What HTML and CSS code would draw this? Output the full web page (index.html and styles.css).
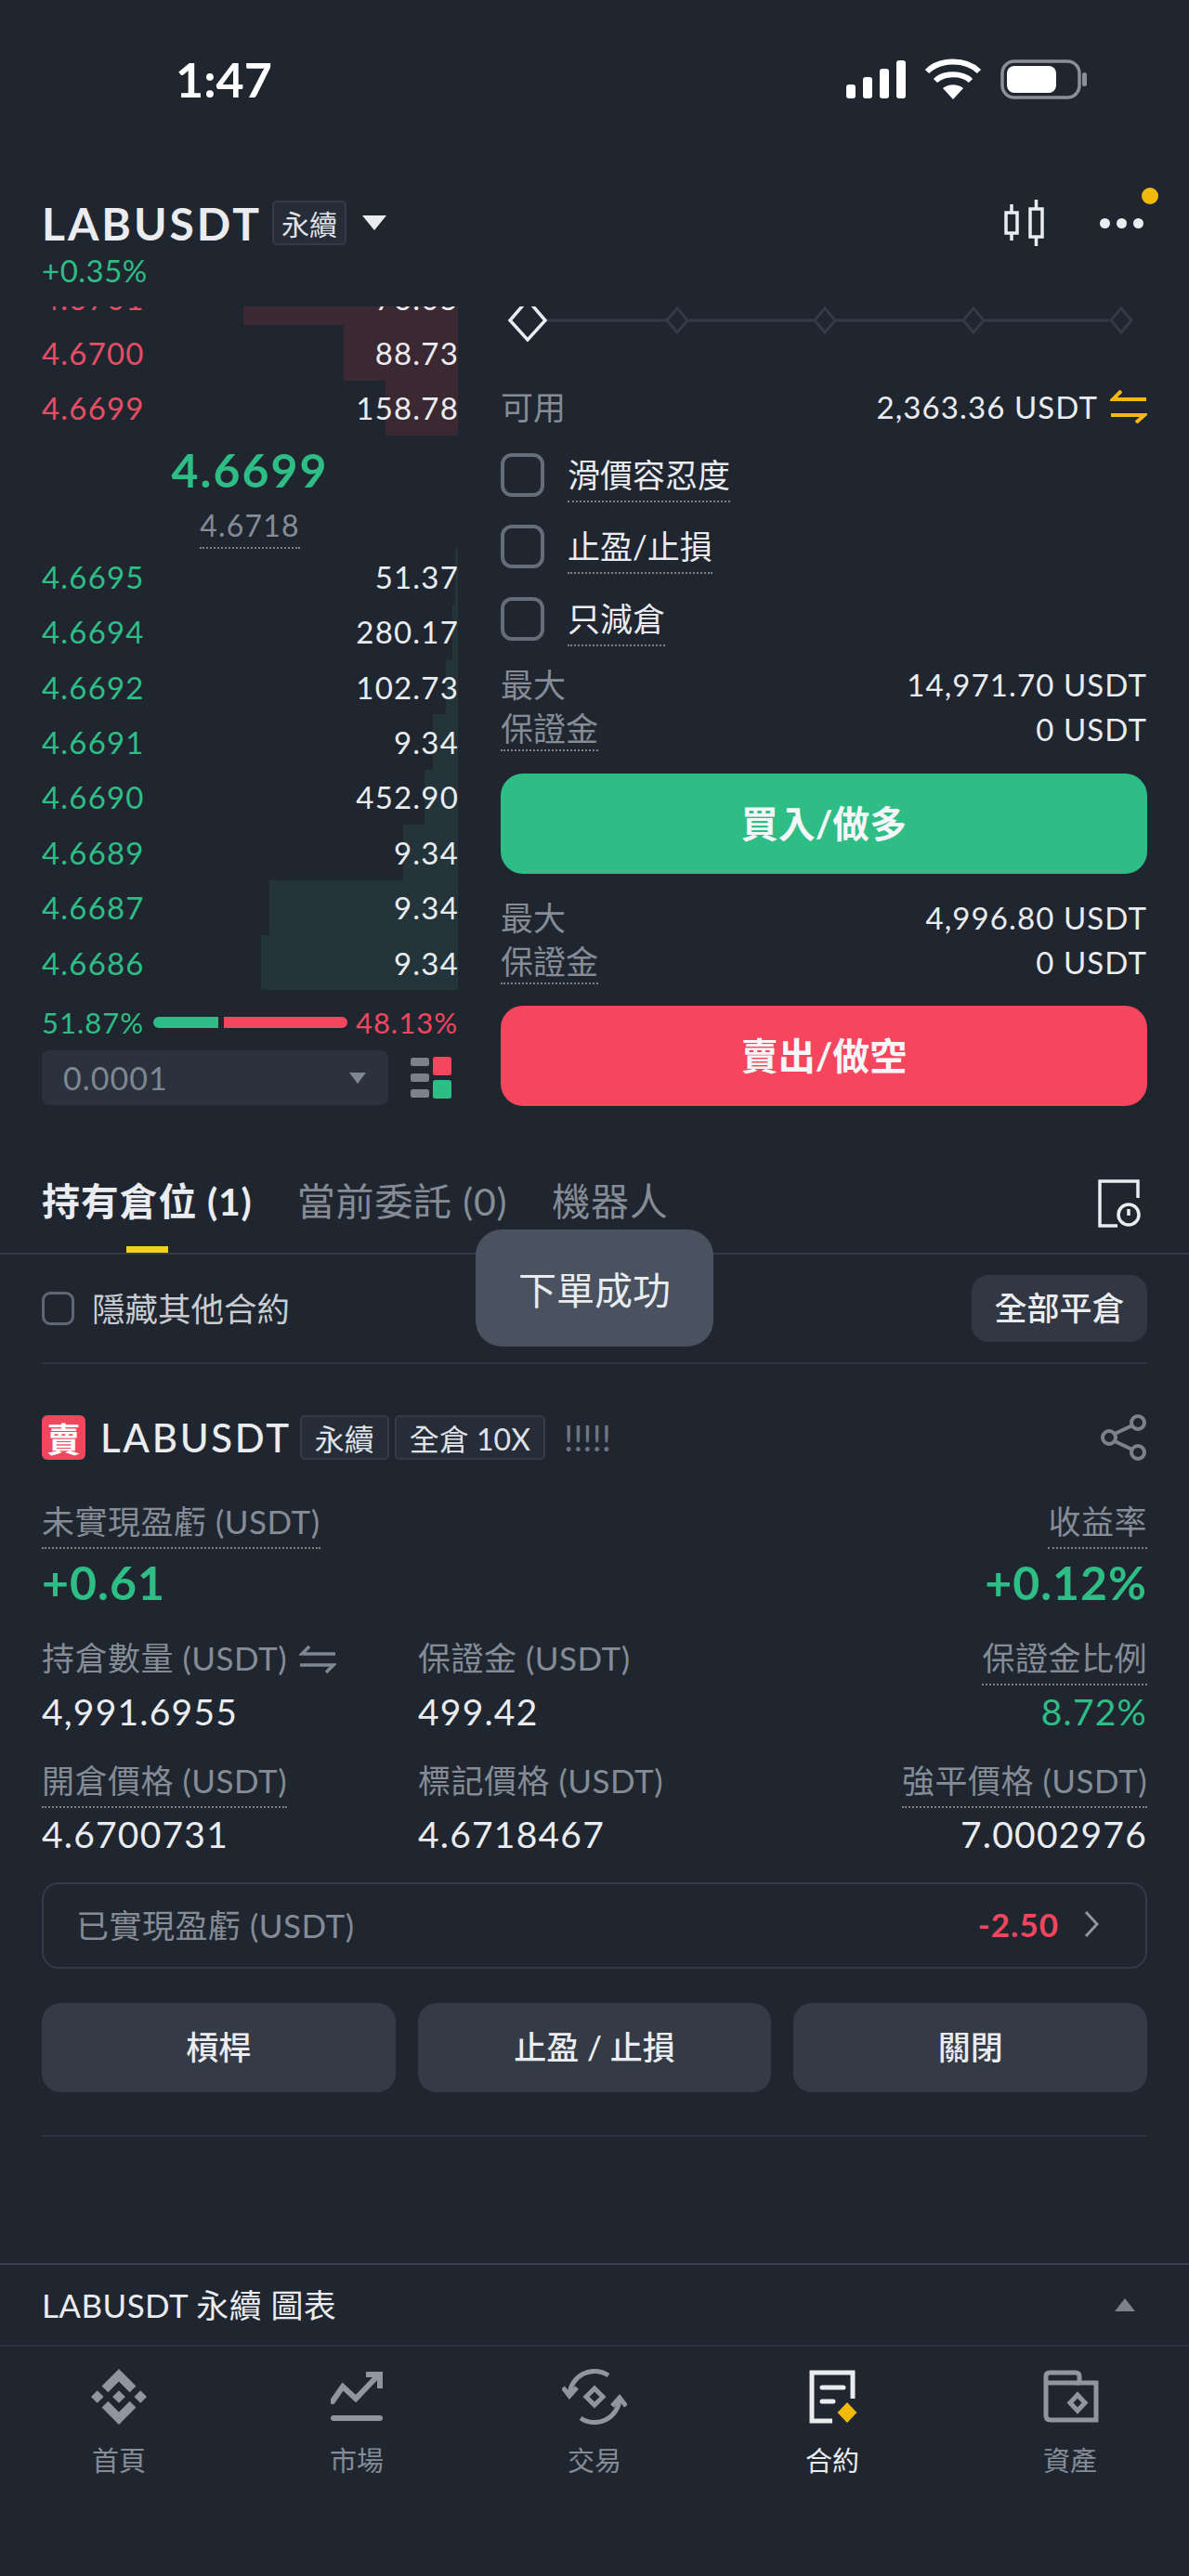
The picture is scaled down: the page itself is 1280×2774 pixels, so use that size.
FILE: index.html
```html
<!DOCTYPE html>
<html lang="zh-Hant">
<head>
    <meta charset="UTF-8">
    <meta name="viewport" content="width=device-width, initial-scale=1.0">
    <title>LABUSDT 永續</title>
    <link rel="stylesheet" href="styles.css">
</head>
<body>
<div class="page">

    <!-- Barra de status -->
    <div class="status">
        <span class="time">1:47</span>
        <svg class="status-icons" width="262" height="50" viewBox="0 0 262 50">
            <g fill="#fff">
                <rect x="-3" y="31" width="10" height="15" rx="3"/>
                <rect x="15" y="23" width="10" height="23" rx="3"/>
                <rect x="33" y="14" width="10" height="32" rx="3"/>
                <rect x="51" y="5" width="10" height="41" rx="3"/>
            </g>
            <g fill="none" stroke="#fff" stroke-width="6">
                <path d="M84 17 C98 3 126 3 140 17"/>
                <path d="M93 27 C102 18 122 18 131 27"/>
            </g>
            <path d="M101 35 C107 30 117 30 123 35 L112 47 Z" fill="#fff"/>
            <rect x="165" y="6" width="83" height="39" rx="13" fill="none" stroke="#8b9096" stroke-width="3.5"/>
            <rect x="170" y="11" width="53" height="29" rx="8" fill="#fff"/>
            <rect x="251" y="18" width="5" height="15" rx="2.5" fill="#8b9096"/>
        </svg>
    </div>

    <!-- Cabecalho do par -->
    <div class="head">
        <div class="head-row">
            <span class="symbol">LABUSDT</span>
            <span class="tag head-tag">永續</span>
            <span class="caret-down"></span>
            <svg class="candle-icon" width="46" height="50" viewBox="0 0 46 50">
                <g fill="none" stroke="#eaecef" stroke-width="3.5">
                    <rect x="3" y="14" width="12" height="22"/>
                    <path d="M9 5 V14 M9 36 V44"/>
                    <rect x="29" y="10" width="13" height="30"/>
                    <path d="M35.5 0 V10 M35.5 40 V50"/>
                </g>
            </svg>
            <div class="more">
                <span></span><span></span><span></span>
                <i class="more-dot"></i>
            </div>
        </div>
        <div class="change">+0.35%</div>
    </div>

    <div class="trade">
        <!-- Livro de ofertas -->
        <div class="book">
            <div class="book-clip">
                <div class="asks">
                    <div class="row ask"><i class="depth" style="width: 231px"></i><span>4.6701</span><b>76.05</b></div>
                    <div class="row ask"><i class="depth" style="width: 123px"></i><span>4.6700</span><b>88.73</b></div>
                    <div class="row ask"><i class="depth" style="width: 78px"></i><span>4.6699</span><b>158.78</b></div>
                </div>
                <div class="mid">
                    <div class="mid-price">4.6699</div>
                    <span class="mark tip">4.6718</span>
                </div>
                <div class="bids">
                    <div class="row bid"><i class="depth" style="width: 3px"></i><span>4.6695</span><b>51.37</b></div>
                    <div class="row bid"><i class="depth" style="width: 6px"></i><span>4.6694</span><b>280.17</b></div>
                    <div class="row bid"><i class="depth" style="width: 13px"></i><span>4.6692</span><b>102.73</b></div>
                    <div class="row bid"><i class="depth" style="width: 27px"></i><span>4.6691</span><b>9.34</b></div>
                    <div class="row bid"><i class="depth" style="width: 36px"></i><span>4.6690</span><b>452.90</b></div>
                    <div class="row bid"><i class="depth" style="width: 59px"></i><span>4.6689</span><b>9.34</b></div>
                    <div class="row bid"><i class="depth" style="width: 203px"></i><span>4.6687</span><b>9.34</b></div>
                    <div class="row bid"><i class="depth" style="width: 212px"></i><span>4.6686</span><b>9.34</b></div>
                </div>
            </div>
            <div class="ratio">
                <span class="up">51.87%</span>
                <div class="ratio-bar">
                    <i class="ratio-buy"></i>
                    <i class="ratio-sell"></i>
                </div>
                <span class="down">48.13%</span>
            </div>
            <div class="book-tools">
                <div class="step">
                    <span>0.0001</span>
                    <i class="caret-small"></i>
                </div>
                <svg width="44" height="46" viewBox="0 0 44 46">
                    <g fill="#7b828c">
                        <rect x="0" y="1" width="20" height="9" rx="2.5"/>
                        <rect x="0" y="18" width="20" height="9" rx="2.5"/>
                        <rect x="0" y="35" width="20" height="9" rx="2.5"/>
                    </g>
                    <rect x="24" y="0" width="20" height="20" rx="2.5" fill="#f6465d"/>
                    <rect x="24" y="25" width="20" height="20" rx="2.5" fill="#2ebd85"/>
                </svg>
            </div>
        </div>

        <!-- Formulario de ordem -->
        <div class="order">
            <svg class="slider" width="696" height="40" viewBox="0 0 696 40">
                <path d="M49 15 H655" stroke="#343b46" stroke-width="3"/>
                <g fill="#1f2630" stroke="#343b46" stroke-width="3">
                    <path d="M190 2 L201 15 L190 28 L179 15 Z"/>
                    <path d="M349 2 L360 15 L349 28 L338 15 Z"/>
                    <path d="M509 2 L520 15 L509 28 L498 15 Z"/>
                    <path d="M668 2 L679 15 L668 28 L657 15 Z"/>
                </g>
                <path d="M29 -7 L48 15 L29 36 L10 15 Z" fill="#1f2630" stroke="#eaecef" stroke-width="3.5"/>
            </svg>
            <div class="line avail">
                <span class="muted">可用</span>
                <span class="avail-value"><span class="num">2,363.36 USDT</span>
                    <svg class="swap" width="40" height="36" viewBox="0 0 40 36">
                        <path d="M39 10 H3 L12 1 M1 27 H37 L28 35" fill="none" stroke="#f0b90b" stroke-width="4"/>
                    </svg>
                </span>
            </div>
            <div class="checks">
                <div class="check-row"><i class="box"></i><span class="tip">滑價容忍度</span></div>
                <div class="check-row"><i class="box"></i><span class="tip">止盈/止損</span></div>
                <div class="check-row"><i class="box"></i><span class="tip">只減倉</span></div>
            </div>
            <div class="summary first">
                <div class="line"><span class="muted">最大</span><span class="num">14,971.70 USDT</span></div>
                <div class="line"><span class="muted tip">保證金</span><span class="num">0 USDT</span></div>
            </div>
            <div class="action buy">買入/做多</div>
            <div class="summary">
                <div class="line"><span class="muted">最大</span><span class="num">4,996.80 USDT</span></div>
                <div class="line"><span class="muted tip">保證金</span><span class="num">0 USDT</span></div>
            </div>
            <div class="action sell">賣出/做空</div>
        </div>
    </div>

    <!-- Abas -->
    <div class="tabs">
        <div class="tab active">持有倉位 (1)<i></i></div>
        <div class="tab">當前委託 (0)</div>
        <div class="tab">機器人</div>
        <svg class="tabs-icon" width="50" height="52" viewBox="0 0 50 52">
            <g fill="none" stroke="#eaecef" stroke-width="3.5">
                <path d="M43 20 V2 H2 V50 H21"/>
                <circle cx="33" cy="38" r="11"/>
                <path d="M33 32 V39"/>
            </g>
        </svg>
    </div>

    <div class="filter">
        <label class="hide">
            <i class="box small"></i>
            <span>隱藏其他合約</span>
        </label>
        <div class="close-all">全部平倉</div>
    </div>

    <!-- Posicao -->
    <div class="position">
        <div class="pos-head">
            <span class="side">賣</span>
            <span class="pos-symbol">LABUSDT</span>
            <span class="tag">永續</span>
            <span class="tag">全倉 10X</span>
            <span class="bangs">!!!!!</span>
            <svg class="share" width="50" height="50" viewBox="0 0 50 50">
                <g fill="none" stroke="#7b828c" stroke-width="4">
                    <circle cx="40" cy="9" r="7"/>
                    <circle cx="9" cy="25" r="7"/>
                    <circle cx="40" cy="41" r="7"/>
                    <path d="M15 21 L34 12 M15 29 L34 38"/>
                </g>
            </svg>
        </div>

        <div class="metrics">
            <div class="metric">
                <span class="label tip">未實現盈虧 (USDT)</span>
                <div class="value big up">+0.61</div>
            </div>
            <div></div>
            <div class="metric right">
                <span class="label tip">收益率</span>
                <div class="value big up">+0.12%</div>
            </div>

            <div class="metric">
                <span class="label">持倉數量 (USDT)
                    <svg class="swap-small" width="40" height="30" viewBox="0 0 40 30">
                        <path d="M39 9 H3 L11 1 M1 21 H37 L29 29" fill="none" stroke="#7f8791" stroke-width="3.5"/>
                    </svg>
                </span>
                <div class="value">4,991.6955</div>
            </div>
            <div class="metric">
                <span class="label">保證金 (USDT)</span>
                <div class="value">499.42</div>
            </div>
            <div class="metric right">
                <span class="label tip">保證金比例</span>
                <div class="value up">8.72%</div>
            </div>

            <div class="metric">
                <span class="label tip">開倉價格 (USDT)</span>
                <div class="value">4.6700731</div>
            </div>
            <div class="metric">
                <span class="label">標記價格 (USDT)</span>
                <div class="value">4.6718467</div>
            </div>
            <div class="metric right">
                <span class="label tip">強平價格 (USDT)</span>
                <div class="value">7.0002976</div>
            </div>
        </div>

        <div class="realized">
            <span class="muted">已實現盈虧 (USDT)</span>
            <span class="realized-value">-2.50</span>
            <svg width="16" height="30" viewBox="0 0 16 30">
                <path d="M2 2 L14 15 L2 28" fill="none" stroke="#8f96a0" stroke-width="3"/>
            </svg>
        </div>

        <div class="pos-actions">
            <div class="pos-btn">槓桿</div>
            <div class="pos-btn">止盈 / 止損</div>
            <div class="pos-btn">關閉</div>
        </div>
        <div class="pos-end"></div>
    </div>

    <!-- Grafico recolhido -->
    <div class="chart-bar">
        <span>LABUSDT 永續 圖表</span>
        <i class="caret-up"></i>
    </div>

    <!-- Navegacao -->
    <nav class="nav">
        <div class="nav-item">
            <svg width="60" height="60" viewBox="0 0 126.6 126.6">
                <g fill="#8f96a0">
                    <path d="M38.7 53.2 L63.3 28.6 L87.9 53.2 L102.2 38.9 L63.3 0 L24.4 38.9 Z"/>
                    <path d="M0 63.3 L14.3 49 L28.6 63.3 L14.3 77.6 Z"/>
                    <path d="M38.7 73.4 L63.3 98 L87.9 73.4 L102.2 87.7 L63.3 126.6 L24.4 87.7 Z"/>
                    <path d="M98 63.3 L112.3 49 L126.6 63.3 L112.3 77.6 Z"/>
                    <path d="M63.3 48.8 L77.8 63.3 L63.3 77.8 L48.8 63.3 Z"/>
                </g>
            </svg>
            <span>首頁</span>
        </div>
        <div class="nav-item">
            <svg width="56" height="60" viewBox="0 0 56 60">
                <g fill="none" stroke="#8f96a0" stroke-width="6" stroke-linecap="round">
                    <path d="M2 35 L13 19 L27 32 L50 8"/>
                    <path d="M38 6 H53 V21" stroke-linecap="butt"/>
                    <path d="M3 53 H53"/>
                </g>
            </svg>
            <span>市場</span>
        </div>
        <div class="nav-item">
            <svg width="70" height="60" viewBox="0 0 70 60">
                <g fill="none" stroke="#8f96a0" stroke-width="5">
                    <path d="M8 28 A27 27 0 0 1 50 7"/>
                    <path d="M1 20 L8 29 L16 20"/>
                    <path d="M62 32 A27 27 0 0 1 20 53"/>
                    <path d="M54 40 L62 31 L69 40"/>
                    <path d="M35 21 L44 30 L35 39 L26 30 Z"/>
                </g>
            </svg>
            <span>交易</span>
        </div>
        <div class="nav-item active">
            <svg width="64" height="60" viewBox="0 0 64 60">
                <g fill="none" stroke="#eaecef" stroke-width="5">
                    <path d="M54 32 V4 H10 V56 H32"/>
                    <path d="M21 20 H44 M21 35 H33" stroke-linecap="round"/>
                </g>
                <path d="M48 36 L58.500 47 L48 58 L37.500 47 Z" fill="#f0b90b"/>
            </svg>
            <span>合約</span>
        </div>
        <div class="nav-item">
            <svg width="64" height="60" viewBox="0 0 64 60">
                <g fill="none" stroke="#8f96a0" stroke-width="5">
                    <path d="M6 50 V8 Q6 4 10 4 H38 Q42 4 42 8 V15 H60 V55 H11 Q6 55 6 50 Z"/>
                    <path d="M6 15 H42"/>
                    <path d="M40 28 L48 36.500 L40 45 L32 36.500 Z"/>
                </g>
            </svg>
            <span>資產</span>
        </div>
    </nav>

    <div class="toast">下單成功</div>
</div>
</body>
</html>
```

FILE: styles.css
```css
* {
    box-sizing: border-box;
}

body {
    margin: 0;
    background-color: #1f2630;
    color: #eaecef;
    font-family: Lato, "Noto Sans CJK TC", sans-serif;
    font-size: 34px;
}

i {
    display: block;
}

.page {
    position: relative;
    width: 1280px;
    height: 2774px;
    overflow: hidden;
}

.up {
    color: #2ebd85;
}

.down {
    color: #f0475e;
}

.muted {
    color: #858c96;
}

/* sublinhado pontilhado */
.tip {
    display: inline-block;
    border-bottom: 2px dotted #7b828c;
}

/* status */
.status {
    display: flex;
    align-items: center;
    justify-content: space-between;
    height: 170px;
    padding: 0 104px 0 189px;
}

.status-icons {
    overflow: visible;
}

.time {
    font-size: 52px;
    font-weight: 700;
    color: #fff;
}

/* cabecalho */
.head {
    height: 160px;
    padding: 46px 45px 0;
}

.head-row {
    display: flex;
    align-items: center;
    height: 48px;
}

.symbol {
    font-size: 48px;
    font-weight: 700;
    letter-spacing: 3px;
}

.tag {
    display: flex;
    align-items: center;
    height: 48px;
    padding: 0 14px;
    background-color: #262d38;
    border: 2px solid #343b46;
    border-radius: 5px;
    font-size: 32px;
    color: #dfe2e6;
}

.head-tag {
    margin-left: 11px;
    padding: 0 8px;
    font-size: 30px;
}

.caret-down {
    width: 0;
    height: 0;
    margin-left: 17px;
    border-left: 13px solid transparent;
    border-right: 13px solid transparent;
    border-top: 16px solid #eaecef;
}

.candle-icon {
    margin-left: auto;
}

.more {
    position: relative;
    display: flex;
    gap: 7px;
    width: 48px;
    margin-left: 58px;
    margin-right: 3px;
}

.more span {
    width: 11px;
    height: 11px;
    border-radius: 50%;
    background-color: #eaecef;
}

.more-dot {
    position: absolute;
    top: -33px;
    right: -15px;
    width: 18px;
    height: 18px;
    border-radius: 50%;
    background-color: #f0b90b;
}

.change {
    margin-top: 11px;
    font-size: 33px;
    line-height: 32px;
    letter-spacing: 0.5px;
    color: #2ebd85;
}

/* area de negociacao */
.trade {
    display: flex;
    gap: 46px;
    padding: 0 45px;
}

.book {
    width: 448px;
    flex-shrink: 0;
}

.book-clip {
    overflow: hidden;
}

.asks {
    margin-top: -39px;
}

.row {
    position: relative;
    display: flex;
    align-items: center;
    justify-content: space-between;
    height: 59.4px;
    font-size: 33px;
    letter-spacing: 1.2px;
}

.row span,
.row b {
    position: relative;
    font-weight: 400;
}

.row b {
    margin-right: -1px;
}

.depth {
    position: absolute;
    top: 0;
    right: 0;
    bottom: 0;
}

.ask span {
    color: #e84d64;
}

.ask .depth {
    background-color: #3a2833;
}

.bid span {
    color: #2ebd85;
}

.bid .depth {
    background-color: #23353a;
}

.mid {
    height: 122px;
    text-align: center;
}

.mid-price {
    font-size: 50px;
    font-weight: 700;
    line-height: 74px;
    letter-spacing: 2px;
    color: #2ebd85;
}

.mark {
    font-size: 32px;
    line-height: 46px;
    letter-spacing: 1.2px;
    color: #858c96;
}

.ratio {
    display: flex;
    align-items: center;
    justify-content: space-between;
    height: 40px;
    margin-top: 15px;
    font-size: 31px;
    letter-spacing: 1px;
}

.ratio-bar {
    display: flex;
    gap: 6px;
    width: 209px;
}

.ratio-buy {
    width: 70px;
    height: 12px;
    background-color: #2ebd85;
    border-radius: 6px 0 0 6px;
}

.ratio-sell {
    flex: 1;
    height: 12px;
    background-color: #f6465d;
    border-radius: 0 6px 6px 0;
}

.book-tools {
    display: flex;
    align-items: center;
    justify-content: space-between;
    margin-top: 10px;
    padding-right: 7px;
}

.step {
    display: flex;
    align-items: center;
    justify-content: space-between;
    width: 373px;
    height: 59px;
    padding: 0 24px 0 23px;
    background-color: #2b323d;
    border-radius: 8px;
    letter-spacing: 1px;
    color: #7f8791;
}

.caret-small {
    width: 0;
    height: 0;
    border-left: 9px solid transparent;
    border-right: 9px solid transparent;
    border-top: 12px solid #7f8791;
}

/* ordem */
.order {
    flex: 1;
    font-size: 35px;
}

.slider {
    display: block;
}

.line {
    display: flex;
    align-items: center;
    justify-content: space-between;
    height: 48px;
}

.line .muted {
    margin-top: -3px;
}

.line .tip {
    margin-top: 0;
    line-height: 46px;
    height: 48px;
}

.num {
    font-size: 33px;
    letter-spacing: 1.1px;
}

.avail {
    height: 60px;
    margin-top: 38px;
}

.avail-value {
    display: flex;
    align-items: center;
    gap: 13px;
}

.checks {
    margin-top: 5px;
}

.check-row {
    display: flex;
    align-items: flex-start;
    gap: 25px;
    height: 77.300px;
    padding-top: 15px;
}

.check-row span {
    line-height: 46px;
    padding-bottom: 5px;
}

.box {
    width: 47px;
    height: 47px;
    border: 4px solid #656d79;
    border-radius: 12px;
}

.summary {
    margin-top: 23px;
}

.summary.first {
    margin-top: 8px;
}

.action {
    display: flex;
    align-items: center;
    justify-content: center;
    height: 108px;
    margin-top: 24px;
    padding-bottom: 4px;
    border-radius: 24px;
    font-size: 40px;
    font-weight: 700;
    color: #f5f6f7;
}

.buy {
    background-color: #2ebd85;
}

.sell {
    margin-top: 23px;
    background-color: #f6465d;
}

/* abas */
.tabs {
    display: flex;
    align-items: flex-start;
    gap: 48px;
    margin-top: 75px;
    padding: 0 48px 0 45px;
    border-bottom: 2px solid #343b46;
}

.tab {
    font-size: 41px;
    line-height: 56px;
    letter-spacing: 0.8px;
    color: #858c96;
    white-space: nowrap;
}

.tab.active {
    font-weight: 700;
    color: #eaecef;
}

.tab.active i {
    width: 45px;
    height: 7px;
    margin: 20px auto 0;
    background-color: #f0d020;
}

.tabs-icon {
    margin: 4px 0 0 auto;
}

.filter {
    display: flex;
    align-items: center;
    justify-content: space-between;
    height: 118px;
    margin: 0 45px;
    border-bottom: 2px solid #2e3540;
}

.hide {
    display: flex;
    align-items: center;
    gap: 19px;
    color: #c9ccd0;
    font-size: 35.500px;
}

.hide span {
    margin-top: -2px;
}

.box.small {
    width: 35px;
    height: 36px;
    border-width: 3px;
    border-color: #5f6773;
    border-radius: 9px;
}

.close-all {
    display: flex;
    align-items: center;
    justify-content: center;
    width: 189px;
    height: 72px;
    padding-bottom: 4px;
    background-color: #323843;
    border-radius: 18px;
    font-size: 35px;
    font-weight: 500;
}

/* posicao */
.position {
    padding: 0 45px;
}

.pos-head {
    display: flex;
    align-items: center;
    gap: 6px;
    height: 48px;
    margin-top: 55px;
}

.side {
    display: flex;
    align-items: center;
    justify-content: center;
    width: 47px;
    height: 48px;
    background-color: #f0475e;
    border-radius: 6px;
    font-size: 36px;
    font-weight: 700;
    color: #fff;
}

.pos-symbol {
    margin: 0 3px 0 10px;
    font-size: 42px;
    font-weight: 500;
    letter-spacing: 2.700px;
}

.bangs {
    margin-left: 14px;
    font-size: 38px;
    letter-spacing: 0;
    color: #6f7682;
}

.share {
    margin-left: auto;
}

.metrics {
    display: grid;
    grid-template-columns: 405px 320px 1fr;
    row-gap: 17px;
    margin-top: 38px;
}

.metric.right {
    text-align: right;
}

.label {
    display: inline-block;
    line-height: 56px;
    height: 58px;
    font-size: 35px;
    letter-spacing: 0.5px;
    color: #858c96;
}

.swap-small {
    margin-left: 4px;
    vertical-align: -3px;
}

.value {
    margin-top: -1px;
    font-size: 39px;
    line-height: 58px;
    letter-spacing: 1.200px;
}

.value.big {
    margin-top: 0;
    font-size: 50px;
    font-weight: 700;
    line-height: 72px;
    letter-spacing: 1px;
}

.realized {
    display: flex;
    align-items: center;
    height: 93px;
    margin-top: 23px;
    padding: 0 50px 3px 35px;
    border: 2px solid #343b46;
    border-radius: 18px;
    font-size: 35px;
    letter-spacing: 0.5px;
}

.realized-value {
    margin: 0 27px 0 auto;
    font-weight: 700;
    letter-spacing: 1px;
    color: #f0475e;
}

.pos-actions {
    display: flex;
    gap: 24px;
    margin-top: 37px;
}

.pos-btn {
    display: flex;
    flex: 1;
    align-items: center;
    justify-content: center;
    height: 96px;
    padding-bottom: 5px;
    background-color: #343b46;
    border-radius: 20px;
    font-size: 35px;
    font-weight: 500;
}

.pos-end {
    margin-top: 46px;
    border-top: 2px solid #2b323d;
}

/* grafico */
.chart-bar {
    display: flex;
    align-items: center;
    justify-content: space-between;
    height: 90px;
    margin-top: 136px;
    padding: 0 58px 0 45px;
    border-top: 2px solid #3a414c;
    border-bottom: 2px solid #2b323d;
    font-size: 35px;
    letter-spacing: 0.4px;
}

.chart-bar span {
    margin-top: -2px;
}

.caret-up {
    width: 0;
    height: 0;
    border-left: 11px solid transparent;
    border-right: 11px solid transparent;
    border-bottom: 14px solid #7b828c;
}

/* navegacao */
.nav {
    display: flex;
    padding-top: 24px;
}

.nav-item {
    display: flex;
    flex: 1;
    flex-direction: column;
    align-items: center;
    gap: 21px;
    font-size: 29px;
    line-height: 36px;
    color: #858c96;
}

.nav-item.active {
    color: #eaecef;
}

.toast {
    position: absolute;
    top: 1324px;
    left: 512px;
    display: flex;
    align-items: center;
    justify-content: center;
    width: 256px;
    height: 126px;
    background-color: #4a525f;
    border-radius: 28px;
    font-size: 41px;
    color: #e8ecef;
}
```
